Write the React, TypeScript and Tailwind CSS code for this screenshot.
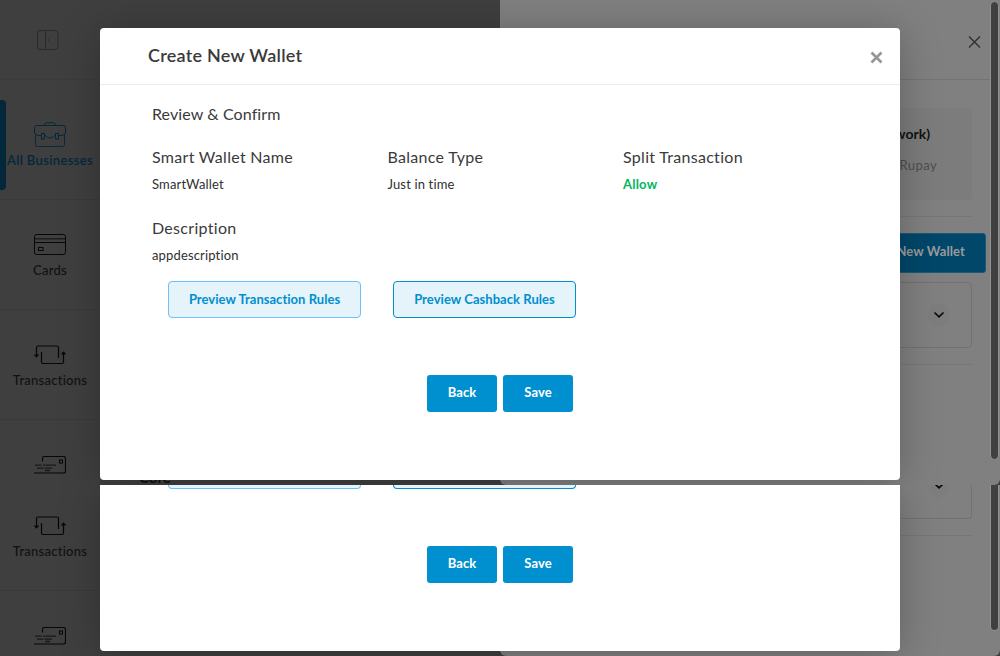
import type { ReactNode } from "react";

function ToggleIcon() {
  return (
    <svg width="22" height="20" viewBox="0 0 22 20" fill="none" stroke="#2a2a2a">
      <rect x="0.5" y="0.5" width="20.5" height="19" rx="2.5" />
      <path d="M8.5 1v18" />
      <path d="M13.5 6.8L11 9.8l2.5 3" strokeWidth="0.8" />
    </svg>
  );
}

function BriefcaseIcon() {
  return (
    <svg width="32" height="26" viewBox="0 0 32 26" fill="none" stroke="#02283a">
      <path d="M11 3.5V2.2Q11 .7 12.5 .7h7Q21 .7 21 2.2v1.3" />
      <path d="M7.5 13.5H4L.5 11.5V5.5q0-2 2-2h27q2 0 2 2v6l-3.500 2h-3.500M10.500 13.500h1q1.500 2.500 4.500 2.500t4.500-2.500h1" />
      <path d="M1.500 12.500v10q0 2 2 2h25q2 0 2-2v-10" strokeWidth="0.9" />
      <rect x="7.500" y="11.500" width="3" height="5.500" />
      <rect x="21.500" y="11.500" width="3" height="5.500" />
    </svg>
  );
}

function CardIcon() {
  return (
    <svg width="32" height="22" viewBox="0 0 32 22" fill="none" stroke="#070707">
      <rect x="0.5" y="0.5" width="31" height="20" rx="2.200" />
      <path d="M1 4.800h30" strokeWidth="1.200" stroke="#161616" />
      <path d="M1 8.500h30" />
      <rect x="4.500" y="13.500" width="4.500" height="3" />
    </svg>
  );
}

function TransferIcon() {
  return (
    <svg width="32" height="20" viewBox="0 0 32 20" fill="none" stroke="#070707" strokeWidth="1.200">
      <path d="M2.500 11V2.500q0-1.500 1.500-1.500h19q1.500 0 1.500 1.500V13" />
      <path d="M.5 9.500l2 2.300 2-2.300" />
      <path d="M7.500 7v10q0 1.500 1.500 1.500h19q1.500 0 1.500-1.500V8" />
      <path d="M27.500 9.500l2-2.300 2 2.300" />
    </svg>
  );
}

function MailIcon() {
  return (
    <svg width="32" height="18" viewBox="0 0 32 18" fill="none" stroke="#070707">
      <path d="M8.500 5.500v-3q0-2 2-2h19q2 0 2 2v12.500q0 2-2 2H0" strokeWidth="1.100" />
      <rect x="25.500" y="4" width="3" height="3" />
      <path d="M1 9.200h6.500M9 9.200h2M11.500 9.200H22M3 12.200h6.500M10.500 12.200h7.500M11 14.500h5" strokeWidth="1.300" stroke="#181818" />
    </svg>
  );
}

function NavItem({ icon, label, active = false }: { icon: ReactNode; label?: string; active?: boolean }) {
  return (
    <div className="flex h-[110px] shrink-0 flex-col items-center border-b border-[#3a3a3a] pt-[34px]">
      <div className="flex h-[22px] items-center">{icon}</div>
      {label && (
        <span
          className={
            active
              ? "mt-[5px] whitespace-nowrap text-[13px] leading-[18px] font-semibold tracking-[0.35px] text-[#02283a]"
              : "mt-[5px] whitespace-nowrap text-[13px] leading-[18px] font-medium tracking-[0.25px] text-[#111]"
          }
        >
          {label}
        </span>
      )}
    </div>
  );
}

function Chevron() {
  return (
    <span className="flex size-[22px] items-center justify-center rounded-full bg-[#7d7d7d]">
      <svg width="12" height="8" viewBox="0 0 12 8" fill="none" stroke="#090909" strokeWidth="1.700">
        <path d="M1.500 1.500L6 5.800l4.500-4.300" />
      </svg>
    </span>
  );
}

function ActionButtons() {
  return (
    <div className="flex justify-center gap-[6px]">
      {["Back", "Save"].map((label) => (
        <button
          key={label}
          className="h-[37px] w-[70px] rounded-[3px] bg-[#008fcf] pb-[2px] text-[13px] font-bold tracking-[0.1px] text-white"
        >
          {label}
        </button>
      ))}
    </div>
  );
}

function Field({ label, value, green = false }: { label: string; value: string; green?: boolean }) {
  return (
    <div className="w-[235.5px]">
      <div className="text-[16px] leading-6 tracking-[0.3px] text-[#3a3a3a]">{label}</div>
      <div
        className={
          green
            ? "mt-[5px] text-[13px] leading-5 font-bold tracking-[0.2px] text-[#00b75c]"
            : "mt-[5px] text-[13px] leading-5 tracking-[0.15px] text-[#303030]"
        }
      >
        {value}
      </div>
    </div>
  );
}

function MainFrame() {
  return (
    <section className="relative flex h-[485px] overflow-hidden bg-[#3f3f3f]">
      <nav className="flex w-[100px] flex-col">
        <div className="flex h-20 shrink-0 items-center border-b border-[#3b3b3b] pl-[37px]">
          <ToggleIcon />
        </div>
        <div className="relative h-[10px] shrink-0">
          <span className="absolute top-5 left-0 h-[90px] w-[6px] rounded-r-[4px] bg-[#02283a]" />
        </div>
        <NavItem icon={<BriefcaseIcon />} label="All Businesses" active />
        <NavItem icon={<CardIcon />} label="Cards" />
        <NavItem icon={<TransferIcon />} label="Transactions" />
        <NavItem icon={<MailIcon />} />
      </nav>
      <div className="flex w-[400px] items-end overflow-hidden pl-[39px] text-[15px] leading-4 font-bold text-[#111]">
        Core
      </div>
      <aside className="flex w-[500px] overflow-hidden rounded-b-[6px] bg-[#808080]">
        <div className="w-[490px]">
          <div className="flex h-20 items-center justify-end border-b border-[#747474] pt-[5px] pr-[9px]">
            <svg width="14" height="14" viewBox="0 0 14 14" fill="none" stroke="#333" strokeWidth="1.500">
              <path d="M2 1.500l11 11M13 1.500l-11 11" />
            </svg>
          </div>
          <div className="mt-7 mr-[18px] h-[92px] rounded-[4px] bg-[#7c7c7c] pt-[16px]">
            <div className="pr-[42px] text-right text-[14px] leading-5 font-bold text-[#111]">(Network)</div>
            <div className="mt-[11px] pr-[35px] text-right text-[13px] leading-5 tracking-[0.4px] text-[#4b4e52]">Rupay</div>
          </div>
          <div className="mt-4 mr-[18px] border-b border-[#777]" />
          <div className="mt-4 flex justify-end pr-[4px]">
            <div className="flex h-[40px] w-[184px] items-center justify-end rounded-[3px] border border-[#1a597a] bg-[#00476a] pr-[20px] pb-[3px] text-[13px] font-bold tracking-[0.1px] text-[#9b9b9b]">
              Create New Wallet
            </div>
          </div>
          <div className="mt-[9px] mr-[18px] ml-5 flex h-[66px] items-center justify-end rounded-[4px] border border-[#727272] pr-[21px]">
            <Chevron />
          </div>
          <div className="mt-4 mr-[18px] border-b border-[#777]" />
        </div>
        <div className="w-[10px] pt-[1px]">
          <div className="h-[459px] w-[9px] rounded-full border border-[#929292] bg-[#404040]" />
        </div>
      </aside>
      <div className="absolute top-7 left-[100px] h-[452px] w-[800px] rounded-[4px] bg-white shadow-[0_4px_40px_rgba(0,0,0,0.25)]">
        <header className="flex h-[57px] items-center justify-between border-b border-[#ebebeb] pr-[17px] pl-12">
          <h1 className="pb-[2px] text-[18px] leading-6 font-semibold tracking-[0.25px] text-[#3a3a3a]">Create New Wallet</h1>
          <svg className="mt-[2px]" width="13" height="13" viewBox="0 0 13 13" fill="none" stroke="#969696" strokeWidth="2.600">
            <path d="M1.500 1.500l10 10M11.500 1.500l-10 10" />
          </svg>
        </header>
        <div className="pl-[52px]">
          <h2 className="mt-[17px] text-[16px] leading-6 tracking-[0.1px] text-[#3a3a3a]">Review &amp; Confirm</h2>
          <div className="mt-[19px] flex">
            <Field label="Smart Wallet Name" value="SmartWallet" />
            <Field label="Balance Type" value="Just in time" />
            <Field label="Split Transaction" value="Allow" green />
          </div>
          <div className="mt-[22px] -mb-px h-12">
            <Field label="Description" value="appdescription" />
          </div>
          <div className="mt-[18px] flex gap-8 pl-4">
            <button className="h-[37px] w-[193px] rounded-[4px] border border-[#70c0fa] bg-[#e5f3fa] text-[13px] font-bold tracking-[0.03px] text-[#008fcf]">
              Preview Transaction Rules
            </button>
            <button className="h-[37px] w-[183px] rounded-[4px] border border-[#008fcf] bg-[#e5f3fa] text-[13px] font-bold tracking-[0.05px] text-[#008fcf]">
              Preview Cashback Rules
            </button>
          </div>
        </div>
        <div className="mt-[57px]">
          <ActionButtons />
        </div>
      </div>
    </section>
  );
}

function LowerFrame() {
  return (
    <section className="relative flex h-[171px] overflow-hidden bg-[#3f3f3f]">
      <nav className="flex w-[100px] flex-col overflow-hidden">
        <div className="-mt-1 flex flex-col">
          <NavItem icon={<TransferIcon />} label="Transactions" />
          <NavItem icon={<MailIcon />} />
        </div>
      </nav>
      <aside className="ml-[400px] flex w-[500px] rounded-b-[6px] bg-[#808080]">
        <div className="w-[490px]">
          <div className="mr-[18px] ml-5 flex h-[34px] justify-end overflow-hidden rounded-b-[4px] border border-t-0 border-[#727272] pr-[21px]">
            <div className="-mt-[10px]">
              <Chevron />
            </div>
          </div>
          <div className="mt-4 mr-[18px] border-b border-[#777]" />
        </div>
        <div className="w-[10px]">
          <div className="h-[146px] w-[9px] rounded-b-full border border-t-0 border-[#929292] bg-[#404040]" />
        </div>
      </aside>
      <div className="absolute top-0 left-[100px] h-[166px] w-[800px] rounded-b-[4px] bg-white shadow-[0_4px_40px_rgba(0,0,0,0.25)]">
        <div className="flex gap-8 pl-[68px]">
          <div className="h-1 w-[193px] rounded-b-[4px] border border-t-0 border-[#70c0fa] bg-[#e5f3fa]" />
          <div className="h-1 w-[183px] rounded-b-[4px] border border-t-0 border-[#008fcf] bg-[#e5f3fa]" />
        </div>
        <div className="mt-[57px]">
          <ActionButtons />
        </div>
      </div>
    </section>
  );
}

export default function App() {
  return (
    <main className="h-[656px] w-[1000px] overflow-hidden font-['Lato',sans-serif]">
      <MainFrame />
      <LowerFrame />
    </main>
  );
}
